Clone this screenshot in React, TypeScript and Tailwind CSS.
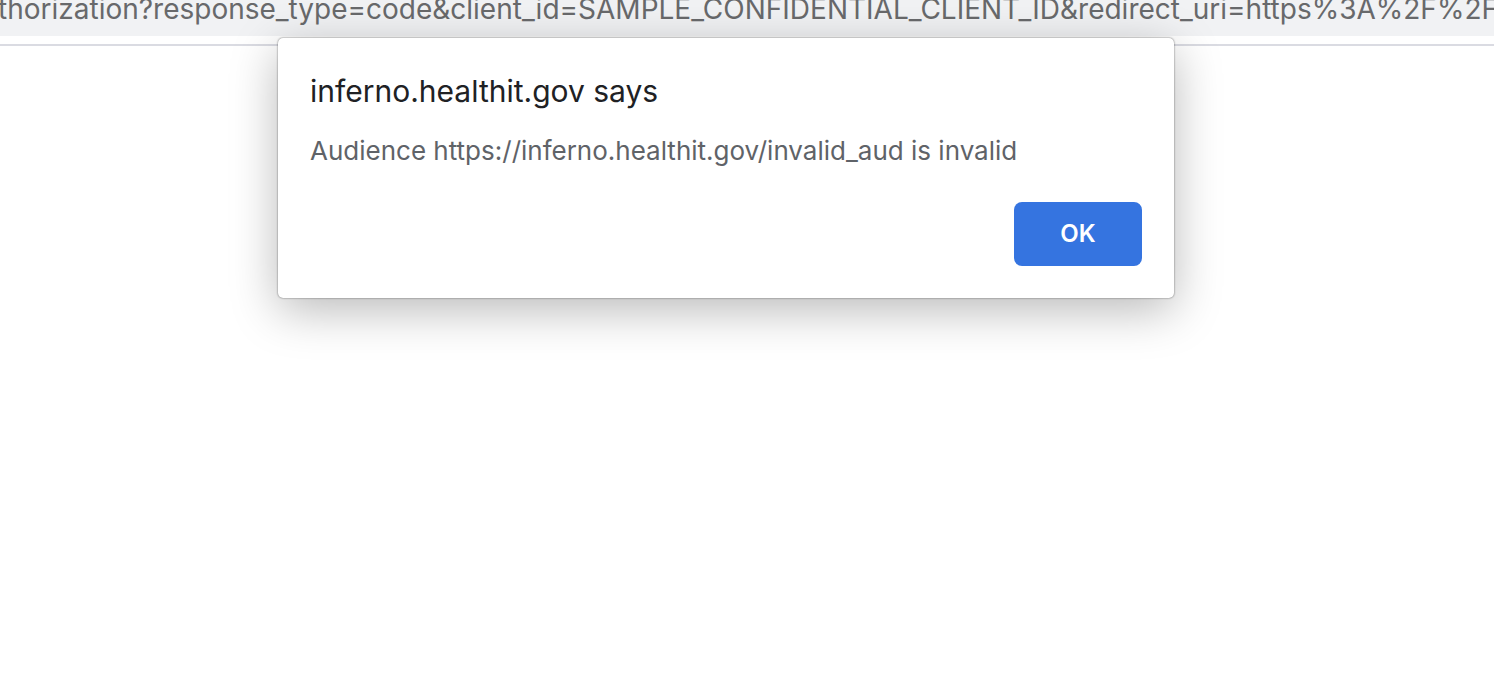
export default function App() {
  return (
    <div className="flex min-h-screen flex-col overflow-x-hidden bg-white font-['Inter',sans-serif]">
      <header className="border-b-2 border-[#dadbe2] pb-2">
        <div className="flex h-9 justify-end overflow-hidden bg-[#f1f2f4]">
          <a
            href="#address"
            className="-mt-2 -mr-1 whitespace-nowrap text-[28px] leading-[34px] text-[#68696b]"
          >
            authorization?response_type=code&amp;client_id=SAMPLE_CONFIDENTIAL_CLIENT_ID&amp;redirect_uri=https%3A%2F%2F
          </a>
        </div>
      </header>
      <main className="flex grow justify-center pr-[42px]">
        <section
          role="alertdialog"
          aria-labelledby="dialog-title"
          aria-describedby="dialog-message"
          className="-mt-2 w-full max-w-[896px] self-start rounded-[5px] bg-white p-8 shadow-[0_0_2px_rgba(0,0,0,0.6),0_12px_48px_rgba(0,0,0,0.28)]"
        >
          <h1 id="dialog-title" className="text-[30px] leading-[42px] text-[#202124]">
            inferno.healthit.gov says
          </h1>
          <p id="dialog-message" className="mt-5 text-[26px] leading-[38px] text-[#5f6368]">
            Audience https://inferno.healthit.gov/invalid_aud is invalid
          </p>
          <div className="mt-8 flex justify-end">
            <button
              type="button"
              className="h-16 w-32 rounded-lg bg-[#3574e0] text-[24px] font-semibold text-white"
            >
              OK
            </button>
          </div>
        </section>
      </main>
    </div>
  );
}
